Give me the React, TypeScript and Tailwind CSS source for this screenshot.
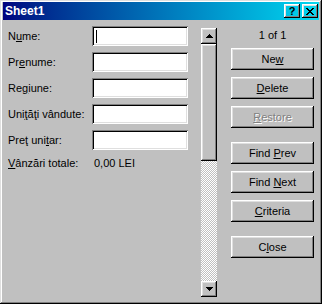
import type { ReactNode } from 'react';

const raised =
  'shadow-[inset_-1px_-1px_#000,inset_1px_1px_#fff,inset_-2px_-2px_#808080,inset_2px_2px_#dfdfdf]';
const sunken =
  'shadow-[inset_1px_1px_#808080,inset_-1px_-1px_#fff,inset_2px_2px_#000,inset_-2px_-2px_#dfdfdf]';

function Label({ pre, u, post }: { pre: string; u: string; post: string }) {
  return (
    <span className="w-[84px] shrink-0 whitespace-pre">
      {pre}
      <u>{u}</u>
      {post}
    </span>
  );
}

function Field({ label, caret }: { label: ReactNode; caret?: boolean }) {
  return (
    <div className="flex h-[20px] mb-[6px] items-center">
      {label}
      <div className={`w-[96px] h-[20px] bg-white flex items-center pl-[4px] ${sunken}`}>
        {caret && <span className="block w-[1px] h-[13px] bg-black" />}
      </div>
    </div>
  );
}

function Btn({ children, disabled, className = '' }: { children: ReactNode; disabled?: boolean; className?: string }) {
  return (
    <div
      className={`h-[22px] w-[83px] flex items-center justify-center ${raised} ${
        disabled ? 'text-[#808080] [text-shadow:1px_1px_0_#fff]' : 'text-black'
      } ${className}`}
    >
      <span className="whitespace-pre">{children}</span>
    </div>
  );
}

function Arrow({ down }: { down?: boolean }) {
  return (
    <div className={`w-[16px] h-[16px] flex items-center justify-center ${raised}`}>
      <svg width="7" height="4" viewBox="0 0 7 4" shapeRendering="crispEdges">
        <polygon points={down ? '0,0 7,0 3.5,4' : '3.5,0 7,4 0,4'} fill="#000" />
      </svg>
    </div>
  );
}

function CloseGlyph() {
  const rows = ['11000011', '01100110', '00111100', '00011000', '00111100', '01100110', '11000011'];
  return (
    <svg width="8" height="7" viewBox="0 0 8 7" shapeRendering="crispEdges">
      {rows.flatMap((r, y) =>
        r.split('').map((c, x) => (c === '1' ? <rect key={`${x}-${y}`} x={x} y={y} width="1" height="1" fill="#000" /> : null)),
      )}
    </svg>
  );
}

export default function App() {
  return (
    <div
      className={`w-[322px] h-[304px] bg-[#c0c0c0] px-[3px] pt-[2px] flex flex-col text-[11px] leading-[13px] text-black font-['Liberation_Sans',Arial,sans-serif] shadow-[inset_-1px_-1px_#000,inset_1px_1px_#dfdfdf,inset_-2px_-2px_#808080,inset_2px_2px_#fff]`}
    >
      {/* title bar */}
      <div className="h-[18px] flex items-center justify-between bg-gradient-to-r from-[#000080] to-[#10d8f0] pl-[2px] pr-[1px]">
        <span className="text-white font-bold text-[12px]">Sheet1</span>
        <div className="flex gap-[2px]">
          <div className={`w-[16px] h-[14px] flex items-center justify-center font-bold text-[11px] leading-none ${raised}`}>?</div>
          <div className={`w-[16px] h-[14px] flex items-center justify-center ${raised}`}>
            <CloseGlyph />
          </div>
        </div>
      </div>

      <div className="flex flex-1">
        {/* form */}
        <div className="pl-[5px] pt-[6px] flex flex-col">
          <Field label={<Label pre="N" u="u" post="me:" />} caret />
          <Field label={<Label pre="Pr" u="e" post="nume:" />} />
          <Field label={<Label pre="Re" u="g" post="iune:" />} />
          <Field label={<Label pre="Uni" u="ţ" post="ăţi vândute:" />} />
          <Field label={<Label pre="Preţ uni" u="t" post="ar:" />} />
          <div className="flex h-[14px] items-center">
            <span className="w-[86px] shrink-0">
              <u>V</u>ânzări totale:
            </span>
            <span>0,00 LEI</span>
          </div>
        </div>

        {/* scrollbar */}
        <div className="ml-[13px] mt-[8px] w-[16px] h-[269px] flex flex-col">
          <Arrow />
          <div className={`h-[117px] ${raised}`} />
          <div className="flex-1 bg-[repeating-conic-gradient(#c0c0c0_0%_25%,#fff_0%_50%)] bg-[length:2px_2px]" />
          <Arrow down />
        </div>

        {/* buttons */}
        <div className="ml-[14px] pt-[9px] flex flex-col">
          <div className="h-[13px] text-center">1 of 1</div>
          <div className="mt-[6px] flex flex-col gap-[7px]">
            <Btn>
              Ne<u>w</u>
            </Btn>
            <Btn>
              <u>D</u>elete
            </Btn>
            <Btn disabled>
              <u>R</u>estore
            </Btn>
            <Btn className="mt-[7px]">
              {'Find '}
              <u>P</u>rev
            </Btn>
            <Btn>
              {'Find '}
              <u>N</u>ext
            </Btn>
            <Btn>
              <u>C</u>riteria
            </Btn>
            <Btn className="mt-[7px]">
              C<u>l</u>ose
            </Btn>
          </div>
        </div>
      </div>
    </div>
  );
}
